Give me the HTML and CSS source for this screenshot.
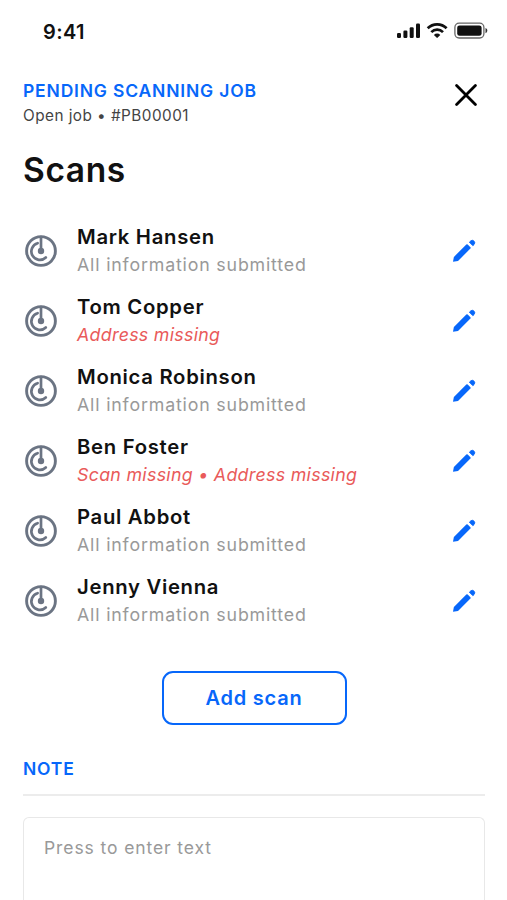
FILE: index.html
```html
<!DOCTYPE html>
<html lang="en">
<head>
<meta charset="utf-8">
<title>Scans</title>
<link rel="stylesheet" href="styles.css">
</head>
<body>
<svg class="defs" aria-hidden="true">
  <symbol id="scan" viewBox="0 0 34 34">
    <circle cx="17" cy="17" r="14.4" fill="none" stroke="currentColor" stroke-width="2.9"/>
    <path d="M17 3v14M13.6 9.2a8.5 8.5 0 1 0 8.2 14.3" fill="none" stroke="currentColor" stroke-width="2.7" stroke-linecap="round"/>
    <circle cx="17" cy="17" r="3.2" fill="currentColor"/>
  </symbol>
  <symbol id="pen" viewBox="0 0 24 24">
    <path d="M1 22.8 1.9 17.9 14.3 5.5a1 1 0 0 1 1.4 0l2.7 2.7a1 1 0 0 1 0 1.4L6 21.9Z" fill="currentColor"/>
    <path d="M17.4 3.2 18.5 2.1a2.5 2.5 0 0 1 3.5 0a2.5 2.5 0 0 1 0 3.5L20.9 6.7Z" fill="currentColor" stroke="currentColor" stroke-width=".9" stroke-linejoin="round"/>
  </symbol>
</svg>
<header class="status">
  <span class="time">9:41</span>
  <svg class="indicators" width="92" height="18" viewBox="0 0 92 18">
    <rect x="1" y="11" width="4" height="5" rx="1.2"/>
    <rect x="7.4" y="8.5" width="4" height="7.5" rx="1.2"/>
    <rect x="13.7" y="5.2" width="4" height="10.8" rx="1.2"/>
    <rect x="20" y="1.5" width="4" height="14.5" rx="1.2"/>
    <g fill="none" stroke="#111" stroke-width="2.7">
      <path d="M31.7 6.3a13.3 13.3 0 0 1 18.9 0"/>
      <path d="M35.3 10.1a8.3 8.3 0 0 1 11.7 0"/>
    </g>
    <path d="M41.1 16 37.9 12.9a4.6 4.6 0 0 1 6.4 0Z"/>
    <rect x="58.9" y="1.2" width="29" height="14.8" rx="4.2" fill="none" stroke="#666" stroke-width="1.3"/>
    <rect x="61.2" y="3.4" width="24.4" height="10.4" rx="2.3"/>
    <path d="M89.5 6.1c2.4 1 2.4 4.1 0 5.1Z" fill="#333"/>
  </svg>
</header>
<main>
  <div class="heading">
    <div>
      <div class="label job">PENDING SCANNING JOB</div>
      <div class="meta">Open job • #PB00001</div>
    </div>
    <svg class="close" width="22" height="22" viewBox="0 0 22 22"><path d="M1.6 1.6 20.4 20.4M20.4 1.6 1.6 20.4"/></svg>
  </div>
  <h1>Scans</h1>
  <ul class="list">
    <li><svg class="scan"><use href="#scan"/></svg><div class="info"><div class="name">Mark Hansen</div><div class="sub">All information submitted</div></div><svg class="pen"><use href="#pen"/></svg></li>
    <li><svg class="scan"><use href="#scan"/></svg><div class="info"><div class="name">Tom Copper</div><div class="sub missing">Address missing</div></div><svg class="pen"><use href="#pen"/></svg></li>
    <li><svg class="scan"><use href="#scan"/></svg><div class="info"><div class="name">Monica Robinson</div><div class="sub">All information submitted</div></div><svg class="pen"><use href="#pen"/></svg></li>
    <li><svg class="scan"><use href="#scan"/></svg><div class="info"><div class="name">Ben Foster</div><div class="sub missing">Scan missing • Address missing</div></div><svg class="pen"><use href="#pen"/></svg></li>
    <li><svg class="scan"><use href="#scan"/></svg><div class="info"><div class="name">Paul Abbot</div><div class="sub">All information submitted</div></div><svg class="pen"><use href="#pen"/></svg></li>
    <li><svg class="scan"><use href="#scan"/></svg><div class="info"><div class="name">Jenny Vienna</div><div class="sub">All information submitted</div></div><svg class="pen"><use href="#pen"/></svg></li>
  </ul>
  <button class="add">Add scan</button>
  <div class="label note">NOTE</div>
  <div class="field">Press to enter text</div>
</main>
</body>
</html>
```
FILE: styles.css
```css
* { box-sizing: border-box; }
body {
  margin: 0;
  height: 900px;
  display: flex;
  flex-direction: column;
  background: #fff;
  color: #111;
  font-family: Inter, "Liberation Sans", sans-serif;
}
.defs { display: none; }
.status {
  height: 62px;
  flex: none;
  padding: 0 19px 0 43px;
  display: flex;
  align-items: center;
  justify-content: space-between;
}
.time { padding-top: 1px; font-size: 20px; font-weight: 600; line-height: 24px; letter-spacing: 0.4px; }
.indicators { fill: #111; }
main { flex: 1; min-height: 0; display: flex; flex-direction: column; padding: 18px 22px 0 23px; }
main > * { flex: none; }
.heading { display: flex; justify-content: space-between; height: 65px; }
.label { color: #0767fa; font-size: 17.5px; font-weight: 600; line-height: 22px; white-space: nowrap; letter-spacing: 0.82px; }
.meta { margin-top: 3px; color: #444; font-size: 15.3px; line-height: 22px; letter-spacing: 0.47px; }
.close { margin: 4px 8px 0 0; stroke: #000; stroke-width: 2.8; stroke-linecap: round; }
h1 { margin: 0; font-size: 33.5px; line-height: 50px; font-weight: 600; letter-spacing: 0.6px; }
.list { list-style: none; margin: 20.8px 0 0; padding: 0; }
.list li { height: 70px; display: flex; align-items: center; }
.scan { width: 34px; height: 34px; margin-left: 1.4px; color: #6b7483; flex: none; }
.info { flex: 1; margin-left: 18.6px; white-space: nowrap; }
.name { font-size: 20.3px; font-weight: 600; line-height: 28px; letter-spacing: 0.7px; }
.sub { font-size: 17.8px; line-height: 28px; color: #999; letter-spacing: 0.82px; }
.missing { color: #e95a5a; font-style: italic; letter-spacing: 0.3px; }
.pen { width: 24px; height: 24px; margin-right: 9px; color: #0767fa; flex: none; }
.add {
  display: block;
  width: 185px;
  height: 54px;
  margin: 35.2px 0 0 138.5px;
  padding: 0;
  border: 2px solid #0767fa;
  border-radius: 11px;
  background: #fff;
  color: #0767fa;
  font: 600 20px/50px Inter, "Liberation Sans", sans-serif;
  letter-spacing: 0.8px;
}
.note { margin-top: 33px; height: 38px; border-bottom: 2px solid #ececec; }
main > .field {
  flex: 1 0 0;
  margin-top: 21px;
  padding: 17px 20px 0;
  border: 1.5px solid #e8e8e8;
  border-bottom: 0;
  border-radius: 6px 6px 0 0;
  color: #999;
  font-size: 17.5px;
  line-height: 26px;
  letter-spacing: 0.9px;
}
```
